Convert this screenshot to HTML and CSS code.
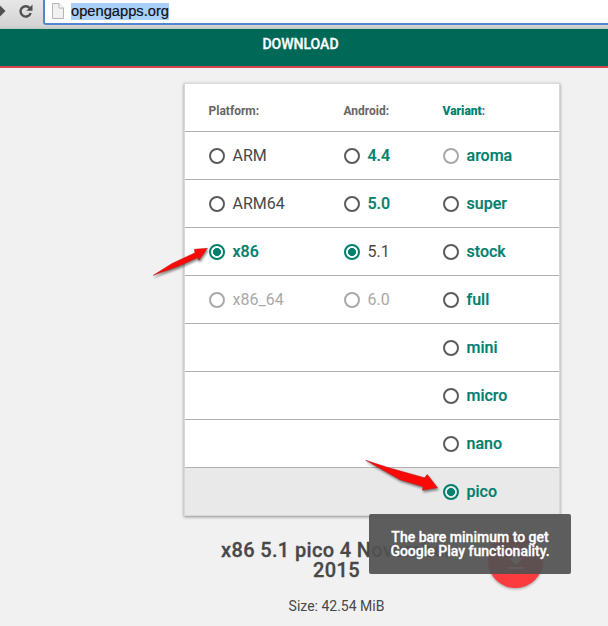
FILE: index.html
```html
<!DOCTYPE html>
<html lang="en">
<head>
<meta charset="utf-8">
<title>Open GApps</title>
<link rel="stylesheet" href="styles.css">
</head>
<body>
<header class="toolbar">
  <svg class="nav" width="43" height="28" viewBox="0 0 43 28">
    <path d="M0 5.500L5.500 11 0 16.500z" fill="#4f4f4f"/>
    <path d="M29.500 7.800A5.200 5.200 0 1 0 30.700 13" fill="none" stroke="#505050" stroke-width="2.400"/>
    <path d="M32.500 4.600V10.800H26.300z" fill="#505050"/>
  </svg>
  <div class="address">
    <svg width="14" height="18" viewBox="0 0 14 18">
      <path d="M1.500 1.500H8L12.500 6V16.500H1.500z" fill="#f1f1f1" stroke="#b5b5b5"/>
      <path d="M8 1.500V6H12.500" fill="#fff" stroke="#b5b5b5"/>
    </svg>
    <span class="url">opengapps.org</span>
  </div>
</header>
<nav class="banner"><span>DOWNLOAD</span></nav>
<main>
  <section class="card">
    <div class="row head"><span>Platform:</span><span>Android:</span><span><b>Variant</b>:</span></div>
    <div class="row">
      <label><i class="radio"></i>ARM</label>
      <label class="strong"><i class="radio"></i>4.4</label>
      <label class="strong dim-radio"><i class="radio"></i>aroma</label>
    </div>
    <div class="row">
      <label><i class="radio"></i>ARM64</label>
      <label class="strong"><i class="radio"></i>5.0</label>
      <label class="strong"><i class="radio"></i>super</label>
    </div>
    <div class="row">
      <label class="strong"><i class="radio on"></i>x86</label>
      <label><i class="radio on"></i>5.1</label>
      <label class="strong"><i class="radio"></i>stock</label>
    </div>
    <div class="row">
      <label class="disabled"><i class="radio"></i>x86_64</label>
      <label class="disabled"><i class="radio"></i>6.0</label>
      <label class="strong"><i class="radio"></i>full</label>
    </div>
    <div class="row"><label class="strong last"><i class="radio"></i>mini</label></div>
    <div class="row"><label class="strong last"><i class="radio"></i>micro</label></div>
    <div class="row"><label class="strong last"><i class="radio"></i>nano</label></div>
    <div class="row hover"><label class="strong last"><i class="radio on"></i>pico</label></div>
  </section>
  <section class="result">
    <div class="summary">
      <h1>x86 5.1 pico 4 November<br>2015</h1>
      <p>Size: 42.54 MiB</p>
    </div>
    <div class="fab">
      <svg width="24" height="24" viewBox="0 0 24 24"><path d="M19 9h-4V3H9v6H5l7 7zM5 18v2h14v-2z" fill="#fff"/></svg>
    </div>
  </section>
</main>
<div class="tooltip">The bare minimum to get<br>Google Play functionality.</div>
<svg class="arrows" width="608" height="626" viewBox="0 0 608 626">
  <g fill="#fb0907" stroke="#b51b18" stroke-width=".5">
    <path d="M153.300 275.300L172 263.500 195 252.800 194.300 249.300 207.500 248.300 199 260.300 197.300 257.800 178 266.500z"/>
    <path d="M365.700 460.300L388 467.500 424.500 477.700 427.300 474.500 437.500 487.700 422.300 490.300 423.300 486.800 400 479.700z"/>
  </g>
</svg>
</body>
</html>
```
FILE: styles.css
```css
* { box-sizing: border-box; }
body {
  margin: 0;
  height: 626px;
  overflow: hidden;
  position: relative;
  background: #f1f1f1;
  color: #484848;
  font-family: Roboto, sans-serif;
}
.toolbar {
  height: 29px;
  display: flex;
  background: linear-gradient(#e7e7e7, #d4d4d4 26px, #b9c8c4);
}
.nav { flex: none; }
.address {
  flex: 1;
  height: 25px;
  margin-right: -6px;
  padding: 0 0 1px 6px;
  display: flex;
  align-items: center;
  gap: 6px;
  background: #fff;
  border: 2px solid #5584d0;
  border-top: 0;
  border-radius: 0 0 3px 3px;
}
.url {
  height: 17px;
  line-height: 16px;
  background: #a9cffb;
  color: #111;
  font-family: "Liberation Sans", sans-serif;
  font-size: 14.700px;
  -webkit-text-stroke: .2px #111;
}
.banner {
  height: 39px;
  padding-top: 6px;
  display: flex;
  justify-content: center;
  background: #006857;
  border-bottom: 2px solid #d4464b;
  color: #fff;
  font-size: 14px;
  font-weight: 500;
  line-height: 18px;
  -webkit-text-stroke: .3px #fff;
}
.banner span { margin-right: 7px; }
main { padding: 15px 0 0 184px; }
.card {
  width: 376px;
  height: 433px;
  background: #fff;
  border: 1px solid #d8d8d8;
  border-top-color: #ddd;
  box-shadow: 0 1px 3px rgba(0, 0, 0, .42);
}
.row {
  height: 48px;
  padding-left: 24px;
  display: grid;
  grid-template-columns: 135px 99px 1fr;
  align-items: center;
  border-bottom: 1px solid #b1b1b1;
  font-size: 16px;
}
.row.head {
  padding-top: 7px;
  color: #666;
  font-size: 12px;
  font-weight: 700;
}
.row.head span { margin-left: -.5px; }
.row.hover { height: 47px; background: #e9e9e9; border-bottom: 0; }
.card:has(.hover) { background: linear-gradient(#fff 400px, #e9e9e9 400px); }
.head b, .strong { color: #00806e; }
.strong { font-weight: 500; -webkit-text-stroke: .2px #00806e; }
.row label {
  display: flex;
  align-items: center;
  gap: 7.500px;
}
.row .last { grid-column: 3; }
.radio {
  width: 16px;
  height: 16px;
  border: 2px solid #5b5b5b;
  border-radius: 50%;
}
.radio.on {
  border-color: #00806e;
  background: radial-gradient(circle, #00806e 3.700px, transparent 4.300px);
}
.disabled { color: #a9a9a9; }
.disabled .radio, .dim-radio .radio { border-color: #a9a9a9; }
.result { display: flex; }
.summary { width: 304px; text-align: center; }
h1 {
  margin: 24px 0 0;
  padding-left: 1px;
  font-size: 20px;
  font-weight: 500;
  letter-spacing: .35px;
  line-height: 20px;
  white-space: nowrap;
  -webkit-text-stroke: .3px #484848;
}
p { margin: 16px 0 0; padding-left: 1px; font-size: 14px; line-height: 20px; }
.fab {
  width: 55px;
  height: 55px;
  margin: 17px 0 0;
  display: grid;
  place-items: center;
  background: #fc3b3f;
  border-radius: 50%;
  box-shadow: 0 1px 3px rgba(0, 0, 0, .35);
}
.tooltip {
  position: absolute;
  left: 369px;
  top: 514px;
  width: 202px;
  height: 60px;
  padding-top: 16px;
  background: rgba(82, 82, 82, .93);
  border-radius: 2px;
  color: #fff;
  font-size: 14px;
  font-weight: 500;
  line-height: 14px;
  text-align: center;
  -webkit-text-stroke: .3px #fff;
}
.arrows {
  position: absolute;
  left: 0;
  top: 0;
  filter: drop-shadow(1px 2px 1px rgba(0, 0, 0, .45));
}
```
